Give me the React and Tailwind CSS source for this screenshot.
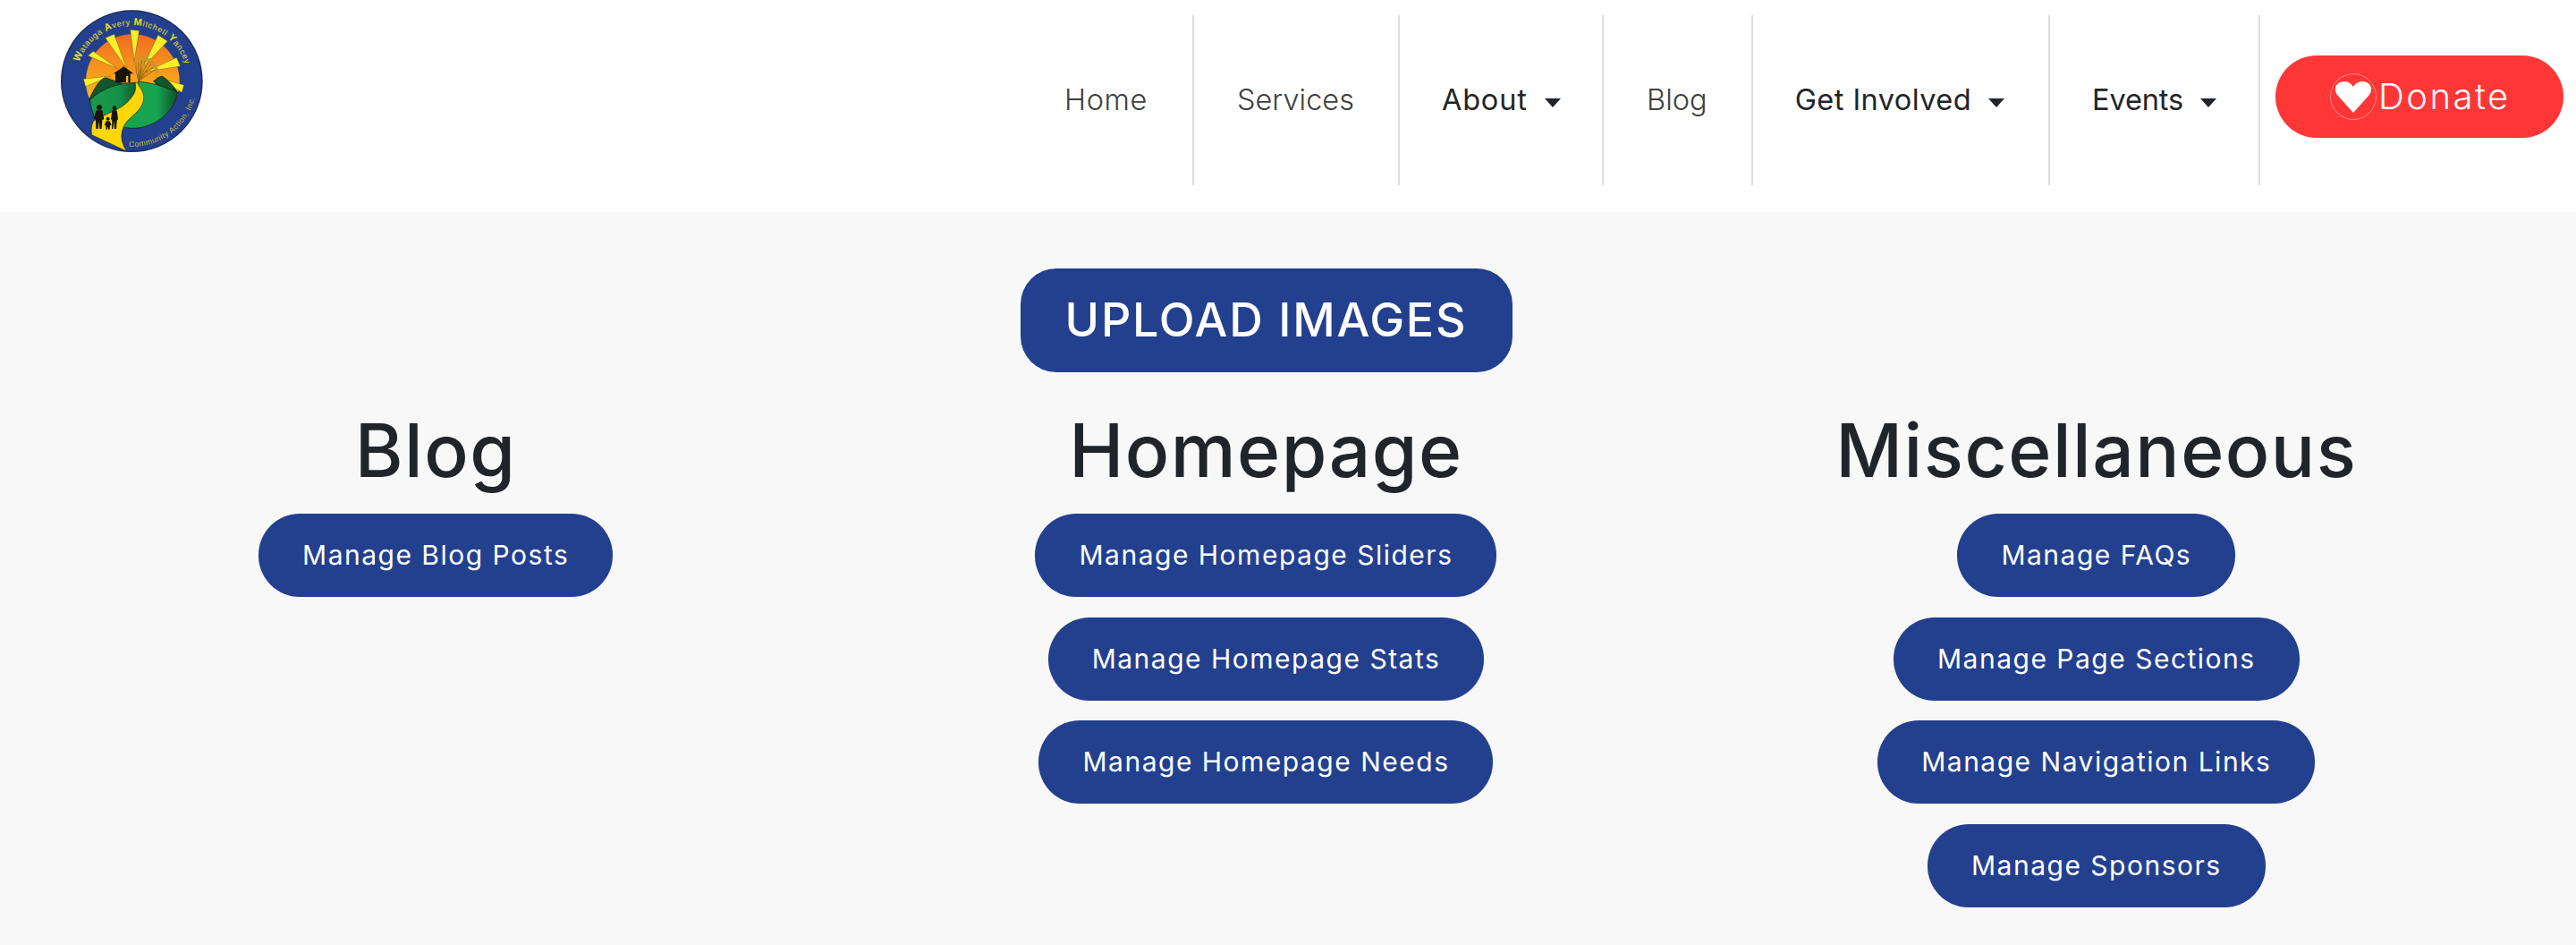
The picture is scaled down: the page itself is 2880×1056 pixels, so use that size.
import React from 'react';

const font = { fontFamily: 'Inter, "Liberation Sans", sans-serif' };

const Caret = () => (
  <svg width="18" height="10" viewBox="0 0 18 10" className="ml-[19px] mt-[6px] shrink-0">
    <path d="M0 0h18L9 10z" fill="#212529" />
  </svg>
);

// wheat stalks behind the house, ends fan out from the same root
const wheat = [
  [335, 205], [347, 195], [360, 190], [372, 192], [384, 198], [392, 208], [400, 218], [405, 230], [380, 225], [360, 215],
];

const Logo = () => (
  <svg width="220" height="190" viewBox="0 0 660 570" className="shrink-0">
    <defs>
      <linearGradient id="sun" x1="0" y1="0" x2="0" y2="1">
        <stop offset="0" stopColor="#f26b21" />
        <stop offset="0.6" stopColor="#fbb01a" />
        <stop offset="1" stopColor="#e58a1f" />
      </linearGradient>
      <linearGradient id="hillR" x1="0" y1="0" x2="1" y2="0">
        <stop offset="0" stopColor="#17a34f" />
        <stop offset="0.65" stopColor="#17a34f" />
        <stop offset="1" stopColor="#0e4f2a" />
      </linearGradient>
      <linearGradient id="hillL" x1="0" y1="0" x2="1" y2="0">
        <stop offset="0" stopColor="#1a9a4a" />
        <stop offset="0.6" stopColor="#179148" />
        <stop offset="1" stopColor="#10502b" />
      </linearGradient>
      <clipPath id="disc"><circle cx="322" cy="272" r="234" /></clipPath>
      <path id="topArc" d="M134 272A188 188 0 0 1 510 272" />
      <path id="bottomArc" d="M312 492A220 220 0 0 0 534 329" />
    </defs>
    <circle cx="322" cy="272" r="236" fill="#23408f" stroke="#1b2a55" strokeWidth="4" />
    <circle cx="325" cy="272" r="157" fill="url(#sun)" />
    <g fill="#fbee2c" stroke="#3a3410" strokeWidth="1">
      <path d="M317 100l30 3-17 102z" />
      <path d="M233 127l30-12 42 115z" />
      <path d="M175 187l18-15 82 58z" />
      <path d="M160 265l7 25 83-35z" />
      <path d="M410 117l32 21-82 87z" />
      <path d="M472 193l13 29-115 18z" />
      <path d="M497 285l-7 25-85-50z" />
    </g>
    <g stroke="#8a6414" strokeWidth="2.5" fill="none">
      {wheat.map(([x, y]) => (
        <path key={`${x}-${y}`} d={`M345 272Q${(345 + x) / 2 - 6} ${(272 + y) / 2 + 4} ${x} ${y}`} />
      ))}
    </g>
    <g fill="#c8962a">
      {wheat.map(([x, y]) => (
        <ellipse key={`${x}-${y}`} cx={x} cy={y + 6} rx="6" ry="10" />
      ))}
    </g>
    <g clipPath="url(#disc)">
      <path d="M178 335C195 300 210 270 232 260C250 265 265 272 290 280L200 340Z" fill="#14552c" stroke="#111" strokeWidth="2" />
      <path d="M395 272C405 265 415 255 425 256C445 270 465 290 477 312L420 300Z" fill="#14552c" stroke="#111" strokeWidth="2" />
      <path d="M345 273C400 280 450 295 475 310C470 370 400 432 320 430C300 428 290 425 280 418L330 300Z" fill="url(#hillR)" stroke="#111" strokeWidth="2" />
      <path d="M182 335C220 295 280 278 335 277L345 330L280 385L200 405C190 375 182 350 182 335Z" fill="url(#hillL)" stroke="#111" strokeWidth="2" />
      <path d="M333 277C338 300 335 315 305 345C270 375 225 385 195 405C185 420 186 440 188 452L305 507C280 470 285 440 300 415C320 385 362 370 362 325C362 305 345 290 340 277Z" fill="#ffd60a" stroke="#111" strokeWidth="1.5" />
    </g>
    <path d="M260 247L295 223L328 247L317 247V277H267V247Z" fill="#17140a" />
    <rect x="303" y="255" width="7" height="21" fill="#f8b62b" />
    <g fill="#17140a">
      <circle cx="213" cy="360" r="9" />
      <path d="M203 370h20l6 30-6 2-2 30h-7l-2-26-3 26h-7l-1-32-7-2z" />
      <circle cx="264" cy="362" r="7" />
      <path d="M256 370h16l4 30-4 4-2 28h-6l-2-26-3 26h-4l1-28-4-4z" />
      <circle cx="242" cy="398" r="6" />
      <path d="M236 406h12l6 14-5 1-1 13h-4l-2-10-2 10h-4l-1-13-5-1z" />
    </g>
    <text fill="#f4e11a" fontSize="27" fontFamily="Liberation Sans, sans-serif" letterSpacing="2.3">
      <textPath href="#topArc" startOffset="11%">
        <tspan fontWeight="700" fontSize="33">W</tspan>atauga <tspan fontWeight="700" fontSize="33">A</tspan>very <tspan fontWeight="700" fontSize="33">M</tspan>itchell <tspan fontWeight="700" fontSize="33">Y</tspan>ancey
      </textPath>
    </text>
    <text fill="#cbbb2e" fontSize="26" fontFamily="Liberation Sans, sans-serif" letterSpacing="1.5">
      <textPath href="#bottomArc">Community Action, Inc.</textPath>
    </text>
  </svg>
);

const navItems = [
  { label: 'Home', className: 'font-light text-[#3f3f3f] pr-[50px] tracking-[0.6px]' },
  { label: 'Services', className: 'font-light text-[#3f3f3f] pl-[48px] pr-[49px]' },
  { label: 'About', caret: true, className: 'font-normal text-[#212529] pl-[47px] pr-[46.5px] tracking-[0.8px]' },
  { label: 'Blog', className: 'font-light text-[#3f3f3f] pl-[48px] pr-[49px]' },
  { label: 'Get Involved', caret: true, className: 'font-normal text-[#212529] pl-[47px] pr-[49px] tracking-[0.45px]' },
  { label: 'Events', caret: true, className: 'font-normal text-[#212529] pl-[47px] pr-[47px] tracking-[-0.15px]' },
];

const columns = [
  { title: 'Blog', links: ['Manage Blog Posts'] },
  { title: 'Homepage', links: ['Manage Homepage Sliders', 'Manage Homepage Stats', 'Manage Homepage Needs'] },
  { title: 'Miscellaneous', links: ['Manage FAQs', 'Manage Page Sections', 'Manage Navigation Links', 'Manage Sponsors'] },
];

export default function App() {
  return (
    <div className="min-h-screen bg-[#f8f8f8]" style={font}>
      <header className="flex h-[237px] items-start justify-between bg-white pl-[40px] pr-[14px]">
        <Logo />
        <nav className="flex items-start pt-[17px]">
          {navItems.map((item) => (
            <a
              key={item.label}
              className={`flex h-[190px] items-center whitespace-nowrap border-r-2 border-[#dedede] text-[32.5px] ${item.className}`}
            >
              <span className="mt-[1px]">{item.label}</span>
              {item.caret && <Caret />}
            </a>
          ))}
          <a className="ml-[17px] mt-[45px] flex h-[92px] w-[322px] items-center justify-start rounded-[46px] bg-[#ff3636] pl-[61px] text-[40px] font-light tracking-[2.5px] text-white">
            <span className="flex h-[52px] w-[52px] items-center justify-center rounded-full border border-[#ff8a8a]">
              <svg width="42" height="35" viewBox="0 0 42 35">
                <path d="M21 35L3 15C-3 5 5 0 11 0C16 0 19 3 21 6C23 3 26 0 31 0C37 0 45 5 39 15Z" fill="#fff" />
              </svg>
            </span>
            <span className="ml-[2px]">Donate</span>
          </a>
        </nav>
      </header>

      <main className="pl-[23px] pr-[72px] pt-[63px]">
        <div className="flex justify-center">
          <a className="flex h-[116px] w-[550px] items-center justify-center rounded-[40px] bg-[#23408f] text-[52px] font-medium tracking-[1.8px] text-white">
            UPLOAD IMAGES
          </a>
        </div>
        <div className="mt-[29px] grid grid-cols-3">
          {columns.map((col) => (
            <section key={col.title} className="flex flex-col items-center">
              <h2 className="text-[82px] font-medium leading-[118px] tracking-[1.5px] text-[#212529]">{col.title}</h2>
              <div className="mt-[11px] flex flex-col items-center gap-[22.5px]">
                {col.links.map((link) => (
                  <a
                    key={link}
                    className="flex h-[93px] items-center rounded-[46px] bg-[#23408f] px-[49px] text-[30px] font-normal tracking-[1.5px] text-white"
                  >
                    {link}
                  </a>
                ))}
              </div>
            </section>
          ))}
        </div>
      </main>
    </div>
  );
}
